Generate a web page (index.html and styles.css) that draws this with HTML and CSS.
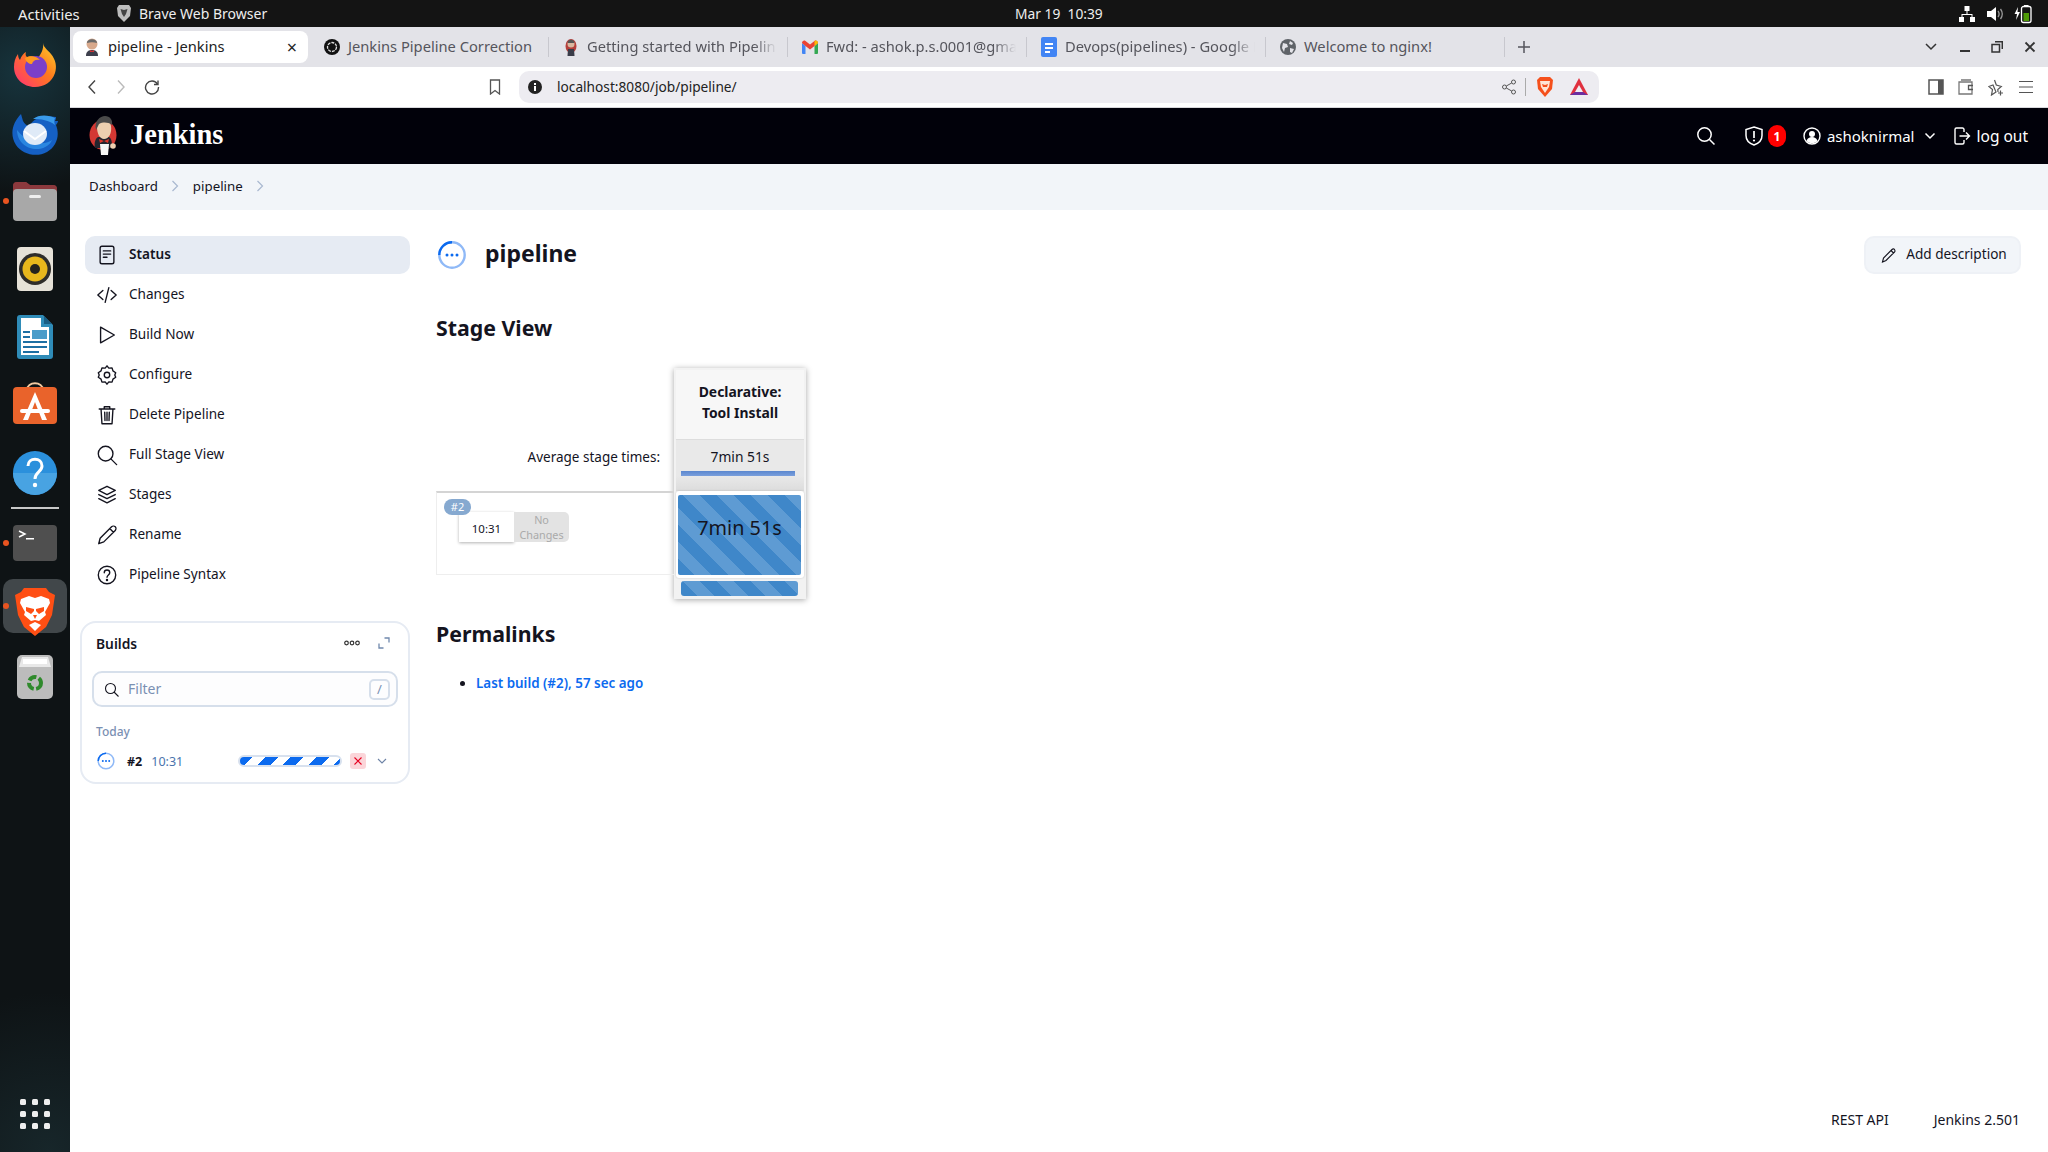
FILE: index.html
```html
<!DOCTYPE html>
<html lang="en">
<head>
<meta charset="utf-8">
<title>pipeline - Jenkins</title>
<link rel="stylesheet" href="styles.css">
</head>
<body>
<div class="topbar">
  <span class="activities">Activities</span>
  <svg class="top-brave" width="16" height="19" viewBox="0 0 16 19"><path d="M3 1h10l2 3-1 8-6 6-6-6-1-8z" fill="#bdbdbd"/><path d="M4.500 5l3.500 1 3.500-1-1.500 5-2 3-2-3z" fill="#444"/></svg>
  <span class="appname">Brave Web Browser</span>
  <span class="clock">Mar 19&nbsp; 10:39</span>
  <span class="tray">
    <svg width="18" height="18" viewBox="0 0 18 18" fill="#fff"><rect x="6.500" y="1" width="5" height="5"/><rect x="1" y="12" width="5" height="5"/><rect x="12" y="12" width="5" height="5"/><path d="M8.500 6h1v3h5v3h-1v-2h-9v2h-1v-3h5z"/></svg>
    <svg width="18" height="18" viewBox="0 0 18 18"><path d="M1 6h4l5-4v14l-5-4H1z" fill="#fff"/><path d="M12 6c1.500 2 1.500 4 0 6M14.500 4c2.500 3.500 2.500 6.500 0 10" stroke="#999" fill="none" stroke-width="1.300"/></svg>
    <svg width="18" height="20" viewBox="0 0 18 20"><path d="M4 3L0.500 10h2.500l-1 6 4-8H3.500z" fill="#fff"/><rect x="7.500" y="2.500" width="9.500" height="16" rx="2" fill="none" stroke="#fff" stroke-width="1.300"/><rect x="10" y="1" width="4.500" height="2" fill="#fff"/><rect x="9.500" y="9" width="5.500" height="8" fill="#4e9a06"/></svg>
  </span>
</div>
<div class="desktop">
  <nav class="dock">
    <div class="dock-item"><svg width="44" height="46" viewBox="0 0 44 46"><defs><linearGradient id="fx" x1="0" y1="1" x2="1" y2="0"><stop offset="0" stop-color="#ff2f7a"/><stop offset=".55" stop-color="#ff7a1c"/><stop offset="1" stop-color="#ffd52e"/></linearGradient></defs><path d="M30 1c1 5 4 6 8 11 5 6 6 13 4 19-3 9-11 14-20 14C10 45 1 36 1 25c0-5 1-9 4-13 0 3 1 5 2 6 1-4 4-7 6-8-1 3 0 4 1 5 3-1 7-1 11 1 3-4 6-9 5-15z" fill="url(#fx)"/><circle cx="23" cy="25" r="11" fill="#7b3fc9"/><path d="M12 16c5-3 12-2 15 2-5-1-7 1-8 4-3 0-6-2-7-6z" fill="#ff9a1f"/></svg></div>
    <div class="dock-item"><svg width="48" height="46" viewBox="0 0 48 46"><path d="M10 4C2 12-2 24 5 35c6 9 20 13 31 7 10-6 13-17 9-27 1-1 2-3 2-4l-3 0c1-2 1-3 1-4-3 0-6-1-9-1-8 0-14 4-17 9-1 2-5 0-7-4z" fill="#1560c4"/><path d="M22 9c6-5 16-4 22-1-1 2-1 4 0 7-6-5-14-6-22-6z" fill="#3a9bea"/><path d="M6 20c0 12 10 20 22 19 6-1 11-4 13-9-6 5-22 6-35-10z" fill="#2a86e0"/><ellipse cx="24" cy="24" rx="12" ry="11" fill="#dfeaf7"/><path d="M13 21l11 8 11-8" fill="none" stroke="#fff" stroke-width="2"/></svg></div>
    <div class="dock-item dock-running"><svg width="44" height="40" viewBox="0 0 44 40"><path d="M0 5a4 4 0 0 1 4-4h9l4 3h23a4 4 0 0 1 4 4v12H0z" fill="#a33f3a"/><path d="M0 5a4 4 0 0 1 4-4h9l4 3h23a4 4 0 0 1 4 4v4H0z" fill="#7d3540" opacity=".6"/><rect y="8" width="44" height="32" rx="4" fill="#a8a8a8"/><rect x="16" y="14" width="12" height="3" rx="1.500" fill="#eee"/></svg></div>
    <div class="dock-item"><svg width="36" height="44" viewBox="0 0 36 44"><rect width="36" height="44" rx="4" fill="#e6e2d8"/><circle cx="18" cy="22" r="16" fill="#2f2d2a"/><circle cx="18" cy="22" r="12.500" fill="#e9b71c"/><circle cx="18" cy="22" r="5" fill="#26231e"/></svg></div>
    <div class="dock-item"><svg width="36" height="44" viewBox="0 0 36 44"><path d="M3 0h23l10 10v31a3 3 0 0 1-3 3H3a3 3 0 0 1-3-3V3a3 3 0 0 1 3-3z" fill="#2f8cb8"/><path d="M4 3h20v9h8v28H4z" fill="#fff"/><path d="M27 1l8 8h-8z" fill="#1a5f85"/><path d="M6 16h7v2H6zM6 21h7v2H6zM6 26h24v2H6zM6 31h24v2H6zM6 36h16v2H6z" fill="#1d6fa3"/><rect x="15" y="15" width="15" height="9" fill="#4a9cc9"/></svg></div>
    <div class="dock-item dock-store"><svg width="44" height="42" viewBox="0 0 44 42"><path d="M14 8c0-9 16-9 16 0" fill="none" stroke="#f2c9a0" stroke-width="2"/><path d="M4 5h36a4 4 0 0 1 4 4v29a4 4 0 0 1-4 4H4a4 4 0 0 1-4-4V9a4 4 0 0 1 4-4z" fill="#e9632b"/><path d="M22 10L10 38h5l7-18 7 18h5z" fill="#fff"/><rect x="7" y="27" width="30" height="4" rx="2" fill="#fff"/></svg></div>
    <div class="dock-item"><svg width="44" height="44" viewBox="0 0 44 44"><circle cx="22" cy="22" r="22" fill="#2b90dc"/><path d="M0 22h44a22 22 0 0 1-44 0z" fill="#48a3e2"/><path d="M15 15c0-9 14-9 14 0 0 6-7 6-7 13" fill="none" stroke="#fff" stroke-width="3"/><circle cx="22" cy="34" r="2.200" fill="#fff"/></svg></div>
    <div class="dock-sep"></div>
    <div class="dock-item dock-running"><svg width="44" height="36" viewBox="0 0 44 36"><rect width="44" height="36" rx="4" fill="#4f4f4f"/><path d="M6 6l6 3-6 3" fill="none" stroke="#fff" stroke-width="1.500"/><rect x="13" y="13" width="8" height="1.500" fill="#fff"/></svg></div>
    <div class="dock-active dock-running"><svg width="40" height="48" viewBox="0 0 40 48"><path d="M9 0h22l3 4 6 3-3 20-6 12-11 9-11-9-6-12L0 7l6-3z" fill="#ff4f14"/><path d="M6 11l8-3 6 2 6-2 8 3 1 4-5 9 1 3-7 6-4-1-4 1-7-6 1-3-5-9z" fill="#fff"/><path d="M11 19l8 2v2l-3 3-5-3zM29 19l-8 2v2l3 3 5-3zM18 27h4l-2 4z" fill="#ff4f14"/><path d="M14 37l6-3 6 3-6 6z" fill="#fff"/></svg></div>
    <div class="dock-item dock-trash"><svg width="36" height="44" viewBox="0 0 36 44"><rect width="36" height="44" rx="5" fill="#bcbcbc"/><path d="M5 2h26l3 10H2z" fill="#e8e8e8"/><path d="M6 4h24v5H6z" fill="#fff"/><circle cx="18" cy="28" r="6" fill="none" stroke="#2f8a2c" stroke-width="4" stroke-dasharray="8 2.500"/></svg></div>
    <div class="dock-grid">
      <i></i><i></i><i></i><i></i><i></i><i></i><i></i><i></i><i></i>
    </div>
  </nav>
  <div class="browser">
    <div class="tabstrip">
      <div class="tab tab-active">
        <svg class="favicon" width="16" height="18" viewBox="0 0 16 18"><circle cx="8" cy="6" r="5.500" fill="#d8a98c"/><path d="M3 5c0-5 10-5 10 0-3-1-7-1-10 0z" fill="#6b6b6b"/><path d="M2 18c0-5 3-6 6-6s6 1 6 6z" fill="#3d3f4c"/><path d="M6 12l2 1 2-1v2H6z" fill="#c33"/></svg>
        <span class="tab-title">pipeline - Jenkins</span>
        <span class="tab-close">×</span>
      </div>
      <div class="tab">
        <svg class="favicon" width="16" height="16" viewBox="0 0 16 16"><circle cx="8" cy="8" r="8" fill="#111"/><circle cx="8" cy="8" r="4.500" fill="none" stroke="#ddd" stroke-width="1.300" stroke-dasharray="3 1"/></svg>
        <span class="tab-title">Jenkins Pipeline Correction</span>
      </div>
      <div class="tab">
        <svg class="favicon" width="14" height="18" viewBox="0 0 14 18"><ellipse cx="7" cy="8" rx="5.500" ry="7" fill="#b5403c"/><circle cx="7" cy="6" r="3.500" fill="#d9b8a0"/><path d="M3.500 5c0-4.500 7-4.500 7 0z" fill="#555"/><path d="M3.500 18l.5-7h6l.5 7z" fill="#3a3c48"/></svg>
        <span class="tab-title tab-fade">Getting started with Pipelin</span>
      </div>
      <div class="tab">
        <svg class="favicon" width="16" height="14" viewBox="0 0 16 14"><path d="M0 3v10a1 1 0 0 0 1 1h2.500V6z" fill="#4285f4"/><path d="M16 3v10a1 1 0 0 1-1 1h-2.500V6z" fill="#34a853"/><path d="M0 3c0-2 2-3 3.500-2L8 4.500 12.500 1C14 0 16 1 16 3l-3.500 3L8 9.500 3.500 6z" fill="#ea4335"/><path d="M12.500 1C14 0 16 1 16 3l-3.500 3z" fill="#fbbc04"/></svg>
        <span class="tab-title tab-fade">Fwd: - ashok.p.s.0001@gmai</span>
      </div>
      <div class="tab">
        <svg class="favicon" width="16" height="20" viewBox="0 0 16 20"><rect width="16" height="20" rx="2" fill="#4285f4"/><path d="M4 6h8v2H4zM4 10h8v2H4zM4 14h5v2H4z" fill="#fff"/></svg>
        <span class="tab-title tab-fade">Devops(pipelines) - Google D</span>
      </div>
      <div class="tab">
        <svg class="favicon" width="16" height="16" viewBox="0 0 16 16"><circle cx="8" cy="8" r="8" fill="#5f6368"/><path d="M3 4l4 1 1 3-3 1-1 4-2-4zM10 2l3 2-1 2-3-1zM10 9l4 1-2 4-2-1z" fill="#e3e3e8"/></svg>
        <span class="tab-title">Welcome to nginx!</span>
      </div>
      <svg class="tab-plus" width="14" height="14" viewBox="0 0 14 14"><path d="M7 1v12M1 7h12" stroke="#55555c" stroke-width="1.500"/></svg>
      <svg class="win-chevron" width="14" height="10" viewBox="0 0 14 10"><path d="M2 2l5 5 5-5" fill="none" stroke="#333" stroke-width="1.500"/></svg>
      <svg class="win-btn win-min" width="12" height="12" viewBox="0 0 12 12"><rect x="1" y="9" width="10" height="2" fill="#333"/></svg>
      <svg class="win-btn win-max" width="12" height="12" viewBox="0 0 12 12"><path d="M4 0.700h7.300V8M1 3.500h7.500V11H1z" fill="none" stroke="#333" stroke-width="1.500"/></svg>
      <svg class="win-btn win-close" width="12" height="12" viewBox="0 0 12 12"><path d="M1.500 1.500l9 9M10.500 1.500l-9 9" stroke="#333" stroke-width="1.800"/></svg>
    </div>
    <div class="toolbar">
      <svg class="tb-back" width="10" height="16" viewBox="0 0 10 16"><path d="M8 1.500L2 8l6 6.500" fill="none" stroke="#444" stroke-width="1.400"/></svg>
      <svg class="tb-fwd" width="10" height="16" viewBox="0 0 10 16"><path d="M2 1.500L8 8l-6 6.500" fill="none" stroke="#bbb" stroke-width="1.400"/></svg>
      <svg class="tb-reload" width="16" height="16" viewBox="0 0 16 16"><path d="M13.500 5A6.500 6.500 0 1 0 14.500 8" fill="none" stroke="#444" stroke-width="1.400"/><path d="M14 1.500V5.500H10" fill="none" stroke="#444" stroke-width="1.400"/></svg>
      <svg class="tb-mark" width="12" height="16" viewBox="0 0 12 16"><path d="M1.500 1h9v14L6 11.500 1.500 15z" fill="none" stroke="#555" stroke-width="1.300"/></svg>
      <div class="addressbar">
        <svg width="14" height="14" viewBox="0 0 14 14"><circle cx="7" cy="7" r="7" fill="#222"/><rect x="6" y="6" width="2" height="5" fill="#fff"/><rect x="6" y="3" width="2" height="2" fill="#fff"/></svg>
        <span class="url">localhost:8080/job/pipeline/</span>
        <svg class="addr-share" width="14" height="16" viewBox="0 0 14 16"><circle cx="2.500" cy="8" r="2" fill="none" stroke="#555"/><circle cx="11.500" cy="3" r="2" fill="none" stroke="#555"/><circle cx="11.500" cy="13" r="2" fill="none" stroke="#555"/><path d="M4.300 7l5.400-3M4.300 9l5.400 3" stroke="#555"/></svg>
        <span class="addr-sep"></span>
        <svg class="addr-brave" width="16" height="20" viewBox="0 0 16 20"><path d="M3 0h10l3 3-1 9-7 8-7-8-1-9z" fill="#f5501c"/><path d="M3 4h10l-1 6-4 6-4-6z" fill="#ffe4d4"/><path d="M5 7l3 1 3-1-1 3H6z" fill="#f5501c"/></svg>
        <svg class="addr-bat" width="18" height="18" viewBox="0 0 18 18"><path d="M9 0l9 17H0z" fill="#e0303f"/><path d="M0 17l5-3h8l5 3z" fill="#6b2fa0"/><path d="M9 7l4 7H5z" fill="#f0eff3"/></svg>
      </div>
      <svg class="tb-panel" width="16" height="16" viewBox="0 0 16 16"><rect x="1" y="1" width="14" height="14" fill="none" stroke="#555" stroke-width="1.500"/><rect x="10" y="1" width="5" height="14" fill="#555"/></svg>
      <svg class="tb-icon" width="16" height="16" viewBox="0 0 16 16"><path d="M1 3h13v12H1zM3 1h10" fill="none" stroke="#777" stroke-width="1.300"/><path d="M15 6.500H10.500v4H15" fill="none" stroke="#555" stroke-width="1.300"/></svg>
      <svg class="tb-icon" width="16" height="17" viewBox="0 0 16 17"><path d="M6.500 1l1.800 5 5 1.500-3.500 3L10 13M8 13l-4.500 3 1-5.500L0.800 7.500 5 6z" fill="none" stroke="#555" stroke-width="1.200"/><path d="M12.500 11.500v5M10 14h5" stroke="#555" stroke-width="1.200"/></svg>
      <svg class="tb-icon" width="16" height="14" viewBox="0 0 16 14"><path d="M1 1.500h14M1 7h14M1 12.500h14" stroke="#555" stroke-width="1.200"/></svg>
    </div>
    <header class="jk-header">
      <svg class="jk-logo" width="30" height="40" viewBox="0 0 30 40"><ellipse cx="14" cy="19" rx="13.500" ry="15" fill="#d33833"/><path d="M6 32c-1-5 0-9 3-11h11c3 2 3 6 3 11z" fill="#24252e"/><path d="M8 11C8 3 21 2 22 10c1 7-2 13-7 13-4 0-7-5-7-12z" fill="#eccfb0"/><path d="M7 14C5 5 11 0 16 0c5 0 8 4 7 9-4-3-9-3-13-1-1 2-2 4-3 6z" fill="#4a4a4a"/><path d="M10 23l5 2 5-2-1 4-4-2-4 2z" fill="#e0352b"/><path d="M11 28h9l-1 11h-7z" fill="#f7f7f7"/><circle cx="24" cy="30" r="2.800" fill="#eccfb0"/></svg>
      <span class="jk-name">Jenkins</span>
      <svg class="hd-search" width="20" height="20" viewBox="0 0 20 20"><circle cx="8.500" cy="8.500" r="6.700" fill="none" stroke="#fff" stroke-width="1.500"/><path d="M13.500 13.500l5 5" stroke="#fff" stroke-width="1.500"/></svg>
      <svg class="hd-shield" width="18" height="20" viewBox="0 0 18 20"><path d="M9 1l8 2.500v6c0 5-3.500 8-8 9.500-4.500-1.500-8-4.500-8-9.500v-6z" fill="none" stroke="#fff" stroke-width="1.500"/><path d="M9 5v7" stroke="#fff" stroke-width="1.700"/><circle cx="9" cy="14.500" r="1.100" fill="#fff"/></svg>
      <span class="hd-badge">1</span>
      <svg class="hd-user" width="18" height="18" viewBox="0 0 18 18"><circle cx="9" cy="9" r="8" fill="none" stroke="#fff" stroke-width="1.400"/><circle cx="9" cy="7" r="3" fill="#fff"/><path d="M3.500 14c1-3 3-4 5.500-4s4.500 1 5.500 4c-3 3-8 3-11 0z" fill="#fff"/></svg>
      <span class="hd-username">ashoknirmal</span>
      <svg class="hd-chev" width="12" height="8" viewBox="0 0 12 8"><path d="M1.500 1.500L6 6l4.500-4.500" fill="none" stroke="#fff" stroke-width="1.500"/></svg>
      <svg class="hd-logout" width="18" height="18" viewBox="0 0 18 18"><path d="M11 5V2.500A1.500 1.500 0 0 0 9.500 1h-6A1.500 1.500 0 0 0 2 2.500v13A1.500 1.500 0 0 0 3.500 17h6a1.500 1.500 0 0 0 1.500-1.500V13" fill="none" stroke="#fff" stroke-width="1.400"/><path d="M6.500 9H16M13 5.500L16.500 9 13 12.500" fill="none" stroke="#fff" stroke-width="1.400"/></svg>
      <span class="hd-logout-text">log out</span>
    </header>
    <div class="crumbs">
      <span>Dashboard</span>
      <svg width="8" height="12" viewBox="0 0 8 12"><path d="M1.500 1l5 5-5 5" fill="none" stroke="#a9b8d0" stroke-width="1.200"/></svg>
      <span>pipeline</span>
      <svg width="8" height="12" viewBox="0 0 8 12"><path d="M1.500 1l5 5-5 5" fill="none" stroke="#a9b8d0" stroke-width="1.200"/></svg>
    </div>
    <div class="content">
      <aside class="sidebar">
        <ul class="side-menu">
          <li class="side-item side-current"><svg class="ico" viewBox="0 0 24 24"><rect x="4.500" y="2.500" width="15" height="19" rx="2" /><path d="M8 7.500h8M8 11h8M8 14.500h4"/></svg>Status</li>
          <li class="side-item"><svg class="ico" viewBox="0 0 24 24"><path d="M7.500 7L2 12l5.500 5M16.500 7l5.500 5-5.500 5M14 4l-4 16"/></svg>Changes</li>
          <li class="side-item"><svg class="ico" viewBox="0 0 24 24"><path d="M5 3.500v17L20 12z"/></svg>Build Now</li>
          <li class="side-item"><svg class="ico" viewBox="0 0 24 24"><path d="M12 2l2 2.500 3.500-.3 1 3.300 3 2-1 2.500 1 2.500-3 2-1 3.300-3.500-.3-2 2.500-2-2.500-3.500.3-1-3.300-3-2 1-2.500-1-2.500 3-2 1-3.300 3.500.3z" stroke-linejoin="round"/><circle cx="12" cy="12" r="3"/></svg>Configure</li>
          <li class="side-item"><svg class="ico" viewBox="0 0 24 24"><path d="M3.500 5.500h17M9 5.500V3h6v2.500M5.500 5.500l1 16h11l1-16M9.500 9l.3 9M12 9v9M14.500 9l-.3 9"/></svg>Delete Pipeline</li>
          <li class="side-item"><svg class="ico" viewBox="0 0 24 24"><circle cx="10.500" cy="10.500" r="8"/><path d="M16.500 16.500l6 6"/></svg>Full Stage View</li>
          <li class="side-item"><svg class="ico" viewBox="0 0 24 24"><path d="M12 2.500l9 4.500-9 4.500L3 7zM3 11.500l9 4.500 9-4.500M3 16l9 4.500 9-4.500"/></svg>Stages</li>
          <li class="side-item"><svg class="ico" viewBox="0 0 24 24"><path d="M3 21.500l1.500-6L17 3c1-1 3-1 4 0s1 3 0 4L8.500 19.500zM15 5l4 4"/></svg>Rename</li>
          <li class="side-item"><svg class="ico" viewBox="0 0 24 24"><circle cx="12" cy="12" r="9.500"/><path d="M9 9.500c0-4 6-4 6 0 0 2.500-3 2.500-3 5"/><circle cx="12" cy="17.500" r=".6"/></svg>Pipeline Syntax</li>
        </ul>
        <section class="builds">
          <div class="builds-head">
            <span class="builds-title">Builds</span>
            <svg class="builds-more" width="16" height="6" viewBox="0 0 16 6"><circle cx="2.500" cy="3" r="1.800" fill="none" stroke="#333" stroke-width="1.200"/><circle cx="8" cy="3" r="1.800" fill="none" stroke="#333" stroke-width="1.200"/><circle cx="13.500" cy="3" r="1.800" fill="none" stroke="#333" stroke-width="1.200"/></svg>
            <svg class="builds-expand" width="12" height="12" viewBox="0 0 12 12"><path d="M6.500 1H11v4.500M5.500 11H1V6.500" fill="none" stroke="#7089ad" stroke-width="1.300"/></svg>
          </div>
          <div class="filter">
            <svg width="15" height="15" viewBox="0 0 15 15"><circle cx="6.500" cy="6.500" r="5" fill="none" stroke="#14141f" stroke-width="1.100"/><path d="M10 10l4.500 4.500" stroke="#14141f" stroke-width="1.100"/></svg>
            <span class="filter-text">Filter</span>
            <span class="filter-key">/</span>
          </div>
          <div class="builds-day">Today</div>
          <div class="build-row">
            <svg class="status-ico" width="18" height="18" viewBox="0 0 18 18"><circle cx="9" cy="9" r="7.800" fill="none" stroke="#8fb9f7" stroke-width="1.500"/><path d="M1.200 9A7.800 7.800 0 0 1 9 1.200" fill="none" stroke="#0b6aef" stroke-width="1.500"/><circle cx="5.800" cy="9" r="1" fill="#0b6aef"/><circle cx="9" cy="9" r="1" fill="#0b6aef"/><circle cx="12.200" cy="9" r="1" fill="#0b6aef"/></svg>
            <span class="build-no">#2</span>
            <span class="build-time">10:31</span>
            <span class="build-progress"></span>
            <span class="build-cancel"><svg width="10" height="10" viewBox="0 0 10 10"><path d="M1.500 1.500l7 7M8.500 1.500l-7 7" stroke="#e6001f" stroke-width="1.100"/></svg></span>
            <svg class="build-chev" width="10" height="6" viewBox="0 0 10 6"><path d="M1 1l4 4 4-4" fill="none" stroke="#6d83a6" stroke-width="1.100"/></svg>
          </div>
        </section>
      </aside>
      <main class="main">
        <div class="title-row">
          <svg width="28" height="28" viewBox="0 0 28 28"><circle cx="14" cy="14" r="12.700" fill="none" stroke="#8fb9f7" stroke-width="2.400"/><path d="M1.300 14A12.700 12.700 0 0 1 14 1.300" fill="none" stroke="#0b6aef" stroke-width="2.400"/><circle cx="9" cy="14" r="1.500" fill="#0b6aef"/><circle cx="14" cy="14" r="1.500" fill="#0b6aef"/><circle cx="19" cy="14" r="1.500" fill="#0b6aef"/></svg>
          <h1 class="page-title">pipeline</h1>
          <button class="add-desc"><svg width="16" height="16" viewBox="0 0 16 16"><path d="M1.500 15l1-4L11 2.500c.8-.8 2-.8 2.500 0s.8 1.700 0 2.500L5 13.500zM10 3.500l2.500 2.500" fill="none" stroke="#14141f" stroke-width="1.100"/></svg><span class="add-desc-text">Add description</span></button>
        </div>
        <h2 class="section-title sv-title">Stage View</h2>
        <div class="stage-view">
          <div class="stage-left">
            <div class="stage-avg-label">Average stage times:</div>
            <div class="stage-build">
              <span class="build-tag">#2</span>
              <div class="build-meta">
                <div class="meta-time">10:31</div>
                <div class="meta-changes">No Changes</div>
              </div>
            </div>
          </div>
          <div class="stage-col">
            <div class="stage-head">Declarative: Tool Install</div>
            <div class="stage-avg">
              <div>7min 51s</div>
              <div class="stage-avg-bar"></div>
            </div>
            <div class="stage-cell"><div class="stage-cell-in stripes">7min 51s</div></div>
            <div class="stage-foot"><div class="stage-foot-bar stripes"></div></div>
          </div>
        </div>
        <h2 class="section-title pl-title">Permalinks</h2>
        <ul class="permalinks"><li><a href="#">Last build (#2), 57 sec ago</a></li></ul>
        <footer class="footer"><span>REST API</span><span>Jenkins 2.501</span></footer>
      </main>
    </div>
  </div>
</div>
</body>
</html>
```

FILE: styles.css
```css
* { box-sizing: border-box; }
html, body { margin: 0; padding: 0; height: 100%; }
body {
  width: 2048px; height: 1152px; overflow: hidden; background: #fff; color: #14141f;
  font-family: "Noto Sans", "DejaVu Sans", sans-serif; font-size: 14px;
  display: flex; flex-direction: column;
}
svg { display: block; flex: none; }

.topbar { height: 27px; background: #141414; color: #eee; display: flex; align-items: center; font-size: 14px; padding-left: 18px; }
.activities { width: 99px; font-size: 14.800px; }
.top-brave { margin-right: 7px; margin-left: -1px; }
.appname { width: 216px; }
.clock { margin-left: 660px; font-size: 13.800px; white-space: nowrap; }
.tray { margin-left: auto; margin-right: 16px; display: flex; align-items: center; gap: 10px; }

.desktop { flex: 1; display: flex; min-height: 0; }
.dock {
  width: 70px; flex: none; display: flex; flex-direction: column; align-items: center; padding-top: 4px;
  background:
    radial-gradient(circle at 30% 4%, #17343d 0, transparent 120px),
    radial-gradient(circle at 70% 100%, #17262a 0, transparent 160px),
    #0e1315;
}
.dock-item { height: 68px; width: 70px; flex: none; display: flex; align-items: center; justify-content: center; position: relative; }
.dock-running::before { content: ""; position: absolute; left: 3px; top: 50%; width: 6px; height: 6px; margin-top: -3px; border-radius: 50%; background: #e95420; }
.dock-sep { width: 48px; height: 2px; background: #c8c8c8; flex: none; }
.dock-store svg { margin-top: -4px; }
.dock-active { width: 64px; height: 54px; margin-top: 2px; border-radius: 10px; background: #41474a; display: flex; justify-content: center; padding-top: 9px; position: relative; flex: none; }
.dock-active::before { left: 0; }
.dock-trash { margin-top: 10px; }
.dock-grid { margin-top: auto; margin-bottom: 23px; display: grid; grid-template-columns: repeat(3, 6px); gap: 6px; }
.dock-grid i { width: 6px; height: 6px; border-radius: 1.500px; background: #eee; }

.browser { flex: 1; min-width: 0; display: flex; flex-direction: column; }
.tabstrip { height: 40px; background: #e3e3e8; display: flex; align-items: center; padding-left: 3px; flex: none; }
.tab { width: 239px; height: 32px; display: flex; align-items: center; padding-left: 14px; color: #55555c; position: relative; font-size: 14.700px; white-space: nowrap; flex: none; }
.tab::after { content: ""; position: absolute; right: 0; top: 6px; height: 20px; width: 1px; background: #c8c8ce; }
.favicon { margin-right: 8px; }
.tab .favicon { width: 16px; }
.tab-active { width: 235px; margin-right: 2px; background: #fff; border-radius: 8px; color: #222; padding-left: 11px; }
.tab-active::after { display: none; }
.tab-title { flex: 1; padding-bottom: 2px; }
.tab-fade { flex: none; width: 190px; -webkit-mask-image: linear-gradient(90deg, #000 88%, transparent); mask-image: linear-gradient(90deg, #000 88%, transparent); }
.tab-close { color: #222; font-size: 18px; line-height: 1; margin-right: 11px; }
.tab-plus { margin-left: 12px; }
.win-chevron { margin-left: auto; margin-right: 21px; }
.win-min { margin-right: 20px; }
.win-max { margin-right: 21px; }
.win-close { margin-right: 12px; }

.toolbar { height: 41px; background: #fff; border-bottom: 1px solid #d8d8dc; display: flex; align-items: center; padding-left: 17px; flex: none; }
.tb-fwd { margin-left: 19px; }
.tb-reload { margin-left: 18px; }
.tb-mark { margin-left: 329px; }
.addressbar { margin-left: 18px; width: 1080px; height: 32px; background: #edecf1; border-radius: 10px; display: flex; align-items: center; padding-left: 9px; color: #222; font-size: 13.700px; }
.url { margin-left: 15px; padding-bottom: 2px; }
.addr-share { margin-left: auto; }
.addr-sep { width: 1px; height: 18px; background: #aaa; margin: 0 11px 0 9px; }
.addr-bat { margin-left: 17px; margin-right: 11px; }
.tb-panel { margin-left: 329px; }
.tb-icon { margin-left: 14px; }

.jk-header { height: 56px; background: #01010a; color: #fff; display: flex; align-items: center; padding-left: 19px; flex: none; }
.jk-name { font-family: "Liberation Serif", serif; font-weight: 700; font-size: 28.500px; margin: 0 0 2px 11px; }
.hd-search { margin-left: auto; }
.hd-shield { margin-left: 29px; }
.hd-badge { width: 18px; height: 22px; border-radius: 9px; background: #f00; font-size: 12px; font-weight: 700; display: flex; align-items: center; justify-content: center; margin-left: 5px; }
.hd-user { margin-left: 17px; }
.hd-username { font-size: 15px; margin-left: 6px; }
.hd-logout-text { font-size: 15.500px; margin-right: 20px; }
.hd-chev { margin-left: 9px; }
.hd-logout { margin-left: 17px; margin-right: 6px; }

.crumbs { height: 46px; background: #f2f5f9; display: flex; align-items: center; padding: 0 0 2px 19px; font-size: 13.300px; flex: none; }
.crumbs svg { margin: 0 13.500px; }

.content { flex: 1; display: flex; min-height: 0; }
.sidebar { width: 340px; flex: none; padding: 26px 0 0 15px; display: flex; flex-direction: column; }
.side-menu { list-style: none; margin: 0; padding: 0; width: 325px; display: flex; flex-direction: column; gap: 2px; }
.side-item { height: 38px; display: flex; align-items: center; gap: 11px; padding: 0 0 4px 11px; border-radius: 10px; font-size: 13.600px; }
.side-current { background: #e6ebf3; font-weight: 600; }
.ico { width: 22px; height: 22px; margin-top: 4px; fill: none; stroke: #14141f; stroke-width: 1.500; stroke-linejoin: round; stroke-linecap: round; }
.builds { margin: 27px 0 0 -5px; width: 330px; height: 163px; border: 2px solid #e6ebf3; border-radius: 16px; padding: 0 10px; }
.builds-head { display: flex; align-items: center; height: 40px; padding: 0 4px 0 4px; }
.builds-title { font-weight: 600; font-size: 13.800px; }
.builds-more { margin-left: auto; }
.builds-expand { margin-left: 18px; margin-right: 4px; }
.filter { height: 36px; margin-top: 8px; border: 2px solid #d6dfeb; border-radius: 10px; background: #fdfdfe; display: flex; align-items: center; padding: 0 6px 0 10px; }
.filter-text { margin-left: 9px; color: #7a90b3; font-size: 14px; padding-bottom: 2px; }
.filter-key { margin-left: auto; width: 21px; height: 21px; border: 2px solid #d6dfeb; border-radius: 5px; color: #7a90b3; display: flex; align-items: center; justify-content: center; font-size: 13px; }
.builds-day { margin: 16px 0 0 4px; color: #7a90b3; font-size: 12px; font-weight: 500; height: 17px; line-height: 17px; }
.build-row { display: flex; align-items: center; height: 24px; margin-top: 9px; padding-left: 5px; }
.build-no { margin-left: 12px; font-weight: 700; font-size: 12.500px; }
.build-time { margin-left: 9px; color: #4a74ad; font-size: 12.500px; }
.build-progress { margin-left: 55px; width: 104px; height: 12px; border-radius: 6px; border: 2px solid #d8e1ee; background: repeating-linear-gradient(135deg, #0b6aef 0 9px, #fff 9px 18px); }
.build-cancel { margin-left: 8px; width: 16px; height: 16px; border-radius: 3px; background: #fbd5d9; display: flex; align-items: center; justify-content: center; }
.build-chev { margin-left: 11px; }

.main { flex: 1; min-width: 0; padding: 26px 27px 0 26px; display: flex; flex-direction: column; }
.title-row { display: flex; align-items: center; height: 38px; }
.title-row > svg { margin-left: 2px; }
.page-title { font-size: 23px; font-weight: 700; margin: 0 0 4px 19px; }
.add-desc { margin-left: auto; height: 38px; width: 157px; border: 2px solid #eef1f6; border-radius: 10px; background: #f2f5f9; color: #14141f; font: inherit; font-size: 13.600px; display: flex; align-items: center; justify-content: center; gap: 9px; padding: 0 0 0 3px; }
.add-desc-text { padding-bottom: 3px; }
.section-title { font-size: 21.300px; font-weight: 700; margin: 0; line-height: 30px; }
.sv-title { margin-top: 39px; }
.stage-view { display: flex; margin-top: 25px; }
.stage-left { width: 238px; flex: none; padding-top: 71px; }
.stage-avg-label { height: 52px; display: flex; align-items: center; justify-content: flex-end; padding-right: 14px; padding-bottom: 16px; font-size: 13.500px; }
.stage-build { height: 84px; border-top: 2px solid #d4d4d4; border-bottom: 1px solid #eee; border-left: 1px solid #eee; position: relative; padding: 19px 0 0 22px; }
.build-tag { position: absolute; left: 7px; top: 6px; width: 27px; height: 16px; border-radius: 8px; background: #86a9d0; color: #fff; font-size: 11px; text-align: center; line-height: 16px; z-index: 1; }
.build-meta { display: flex; }
.meta-time { width: 55px; height: 30px; background: #fff; box-shadow: 0 1px 3px rgba(0,0,0,.3); font-size: 11.500px; display: flex; align-items: center; justify-content: center; padding-top: 2px; }
.meta-changes { width: 55px; height: 30px; background: #e3e3e3; border-radius: 0 5px 5px 0; color: #aaa; font-size: 10.800px; line-height: 14.500px; text-align: center; padding-top: 1px; }
.stage-col { width: 132px; height: 231px; flex: none; background: #f2f2f2; padding: 2px; box-shadow: 0 1px 6px rgba(0,0,0,.35); }
.stage-head { height: 69px; background: #f7f7f7; font-weight: 700; font-size: 13.900px; line-height: 21px; text-align: center; display: flex; align-items: center; justify-content: center; padding: 0 10px 5px; }
.stage-avg { height: 52px; background: linear-gradient(#e9e9e9 70%, #dcdcdc); border-top: 1px solid #ddd; text-align: center; padding-top: 7px; font-size: 13.800px; line-height: 20px; }
.stage-avg-bar { height: 5px; margin: 4px 9px 0 5px; background: linear-gradient(#5b87cf, #7a9fdc); }
.stage-cell { height: 87px; background: #fff; padding: 4px 3px 3px 2px; border-radius: 3px; box-shadow: 0 0 2px rgba(0,0,0,.2); }
.stage-cell-in { height: 80px; border-radius: 2px; display: flex; align-items: center; justify-content: center; font-size: 19.800px; padding-bottom: 16px; color: #14141f; }
.stripes { background: repeating-linear-gradient(45deg, #3f87c9 0 12px, #5e9bd3 12px 24px); }
.stage-foot { padding: 3px 6px 3px 5px; }
.stage-foot-bar { height: 15px; border-radius: 3px; }
.pl-title { margin-top: 20px; }
.permalinks { margin: 24px 0 0; padding: 0 0 0 40px; font-size: 13.400px; line-height: 20px; }
.permalinks a { color: #0b6aef; font-weight: 600; text-decoration: none; }
.footer { margin-top: auto; margin-bottom: 22px; display: flex; justify-content: flex-end; gap: 45px; padding-right: 1px; font-size: 14px; line-height: 20px; }
```
